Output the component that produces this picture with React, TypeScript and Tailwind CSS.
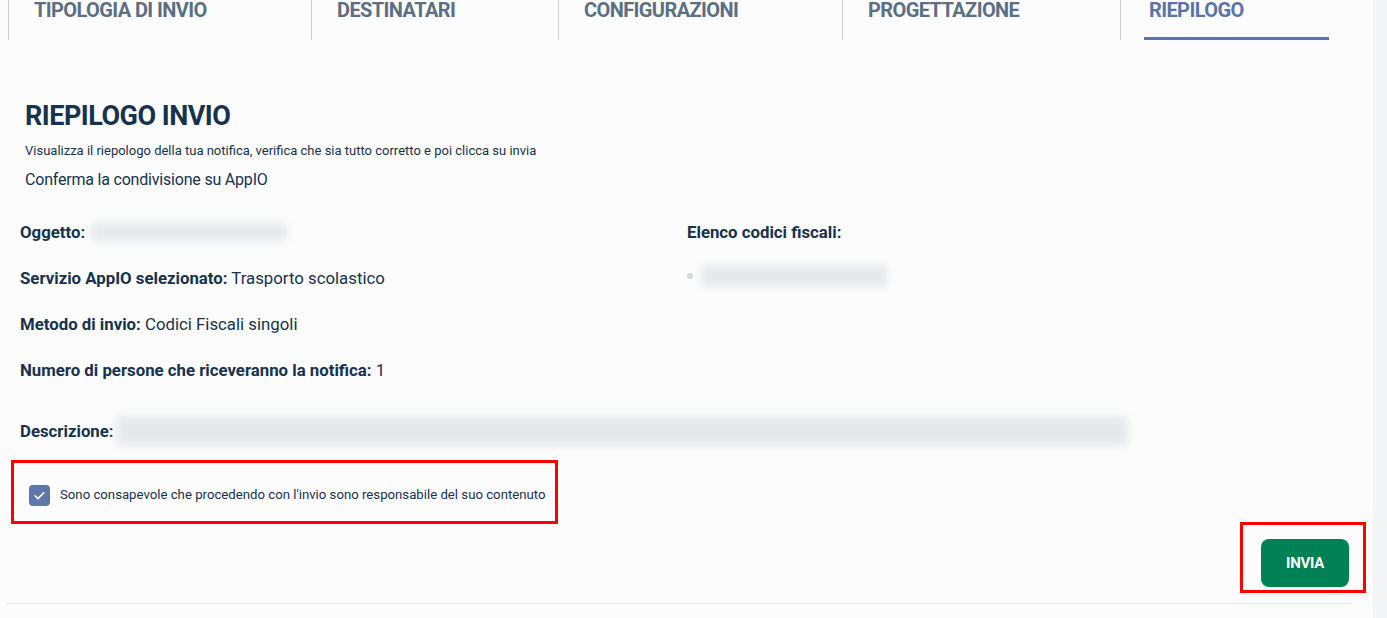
const font = { fontFamily: '"Roboto", "Liberation Sans", sans-serif' };

const tabs = [
  { label: 'TIPOLOGIA DI INVIO', w: 'w-[303px]' },
  { label: 'DESTINATARI', w: 'w-[247px]' },
  { label: 'CONFIGURAZIONI', w: 'w-[284px]' },
  { label: 'PROGETTAZIONE', w: 'w-[278px]' },
];

function Blur({ className }: { className: string }) {
  return (
    <div className={`relative ${className}`}>
      <div className="absolute inset-[2px] rounded-sm bg-[#e6e8eb] blur-[4px]" />
    </div>
  );
}

function Row({ label, value }: { label: string; value?: string }) {
  return (
    <p className="whitespace-nowrap text-[16.8px] text-[#17324d]">
      <span className="font-bold">{label}</span>
      {value && <span> {value}</span>}
    </p>
  );
}

export default function App() {
  return (
    <div className="flex min-h-screen bg-[#fcfcfc]" style={font}>
      <div className="w-[1373px]">
        {/* tabs */}
        <nav className="flex pl-[8px]">
          {tabs.map((t) => (
            <div key={t.label} className={`${t.w} h-[40px] border-l border-[#cfcfcf] pl-[25px]`}>
              <span className="block text-[20px] font-bold leading-[20px] tracking-[-0.6px] text-[#5c6f82]">{t.label}</span>
            </div>
          ))}
          <div className="h-[40px] border-l border-[#cfcfcf] pl-[23px]">
            <div className="h-[40px] w-[185px] border-b-[3px] border-[#5b74a8]">
              <span className="block pl-[5px] text-[20px] font-bold leading-[20px] tracking-[-0.6px] text-[#5b74a8]">RIEPILOGO</span>
            </div>
          </div>
        </nav>

        <section className="pl-[25px] pt-[58px]">
          <h1 className="text-[27px] font-bold leading-[36px] tracking-[-0.5px] text-[#17324d]">RIEPILOGO INVIO</h1>
          <p className="mt-[9px] text-[13px] leading-[16px] text-[#17324d]">
            Visualizza il riepologo della tua notifica, verifica che sia tutto corretto e poi clicca su invia
          </p>
          <p className="mt-[10px] text-[16px] leading-[22px] tracking-[-0.2px] text-[#17324d]">Conferma la condivisione su AppIO</p>
        </section>

        <div className="mt-[30px] flex pl-[20px]">
          <div className="flex w-[667px] flex-col gap-[24px] leading-[22px]">
            <div className="flex items-center">
              <Row label="Oggetto:" />
              <Blur className="ml-[4px] h-[22px] w-[200px]" />
            </div>
            <Row label="Servizio AppIO selezionato:" value="Trasporto scolastico" />
            <Row label="Metodo di invio:" value="Codici Fiscali singoli" />
            <Row label="Numero di persone che riceveranno la notifica:" value="1" />
          </div>
          <div className="flex flex-col leading-[22px]">
            <Row label="Elenco codici fiscali:" />
            <div className="mt-[20px] flex items-center">
              <span className="h-[6px] w-[6px] rounded-full bg-[#d5d7da]" />
              <Blur className="ml-[6px] h-[26px] w-[190px]" />
            </div>
          </div>
        </div>

        <div className="mt-[33px] flex items-center pl-[20px] leading-[32px]">
          <Row label="Descrizione:" />
          <Blur className="ml-[0px] h-[34px] w-[1016px]" />
        </div>

        <div className="ml-[11px] mt-[12px] flex h-[64px] w-[547px] items-center gap-[10px] border-[3px] border-[#ff0000] pl-[15px] pt-[6px]">
          <span className="flex h-[21px] w-[21px] shrink-0 items-center justify-center rounded-[4px] bg-[#5f76a8]">
            <svg viewBox="0 0 24 24" className="h-[15px] w-[15px]" fill="none" stroke="white" strokeWidth="2.5" strokeLinecap="round" strokeLinejoin="round">
              <path d="M5 12.5l4.5 4.5L19 7.5" />
            </svg>
          </span>
          <span className="whitespace-nowrap text-[13.2px] text-[#17324d]">
            Sono consapevole che procedendo con l'invio sono responsabile del suo contenuto
          </span>
        </div>

        <div className="flex justify-end pr-[7px]">
          <div className="-mt-[2px] flex h-[71px] w-[126px] items-end border-[3px] border-[#ff0000] pb-[3px] pl-[18px]">
            <button className="h-[48px] w-[88px] rounded-[8px] bg-[#008055] text-[15px] font-bold tracking-[-0.3px] text-white">INVIA</button>
          </div>
        </div>

        <div className="ml-[6px] mt-[10px] h-px w-[1344px] bg-[#e3e3e3]" />
      </div>
      <div className="flex-1 bg-[#f4f5f7]" />
    </div>
  );
}
